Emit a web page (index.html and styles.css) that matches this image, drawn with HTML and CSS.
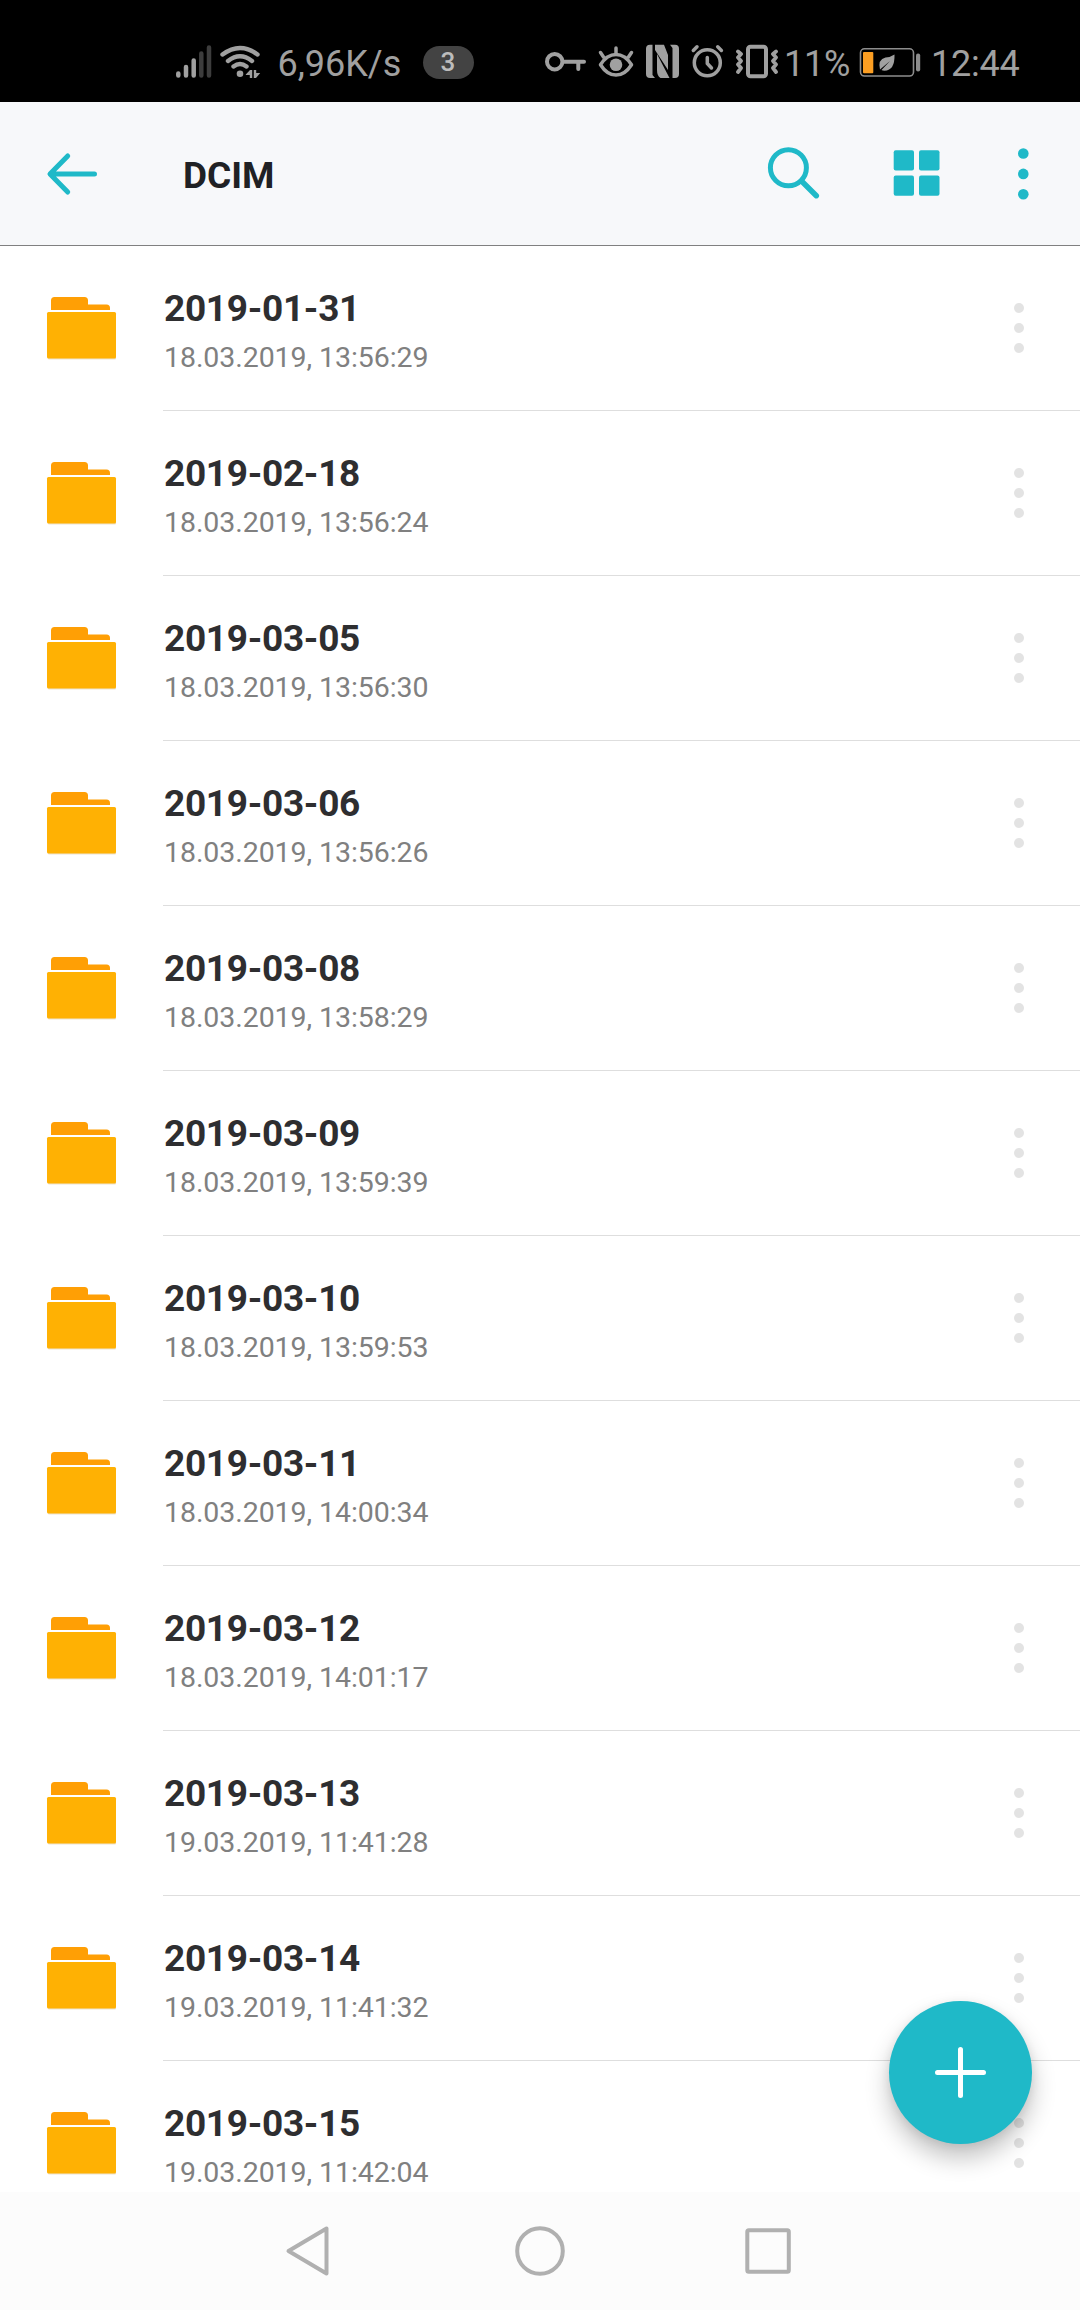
FILE: index.html
```
<!DOCTYPE html>
<html lang="en">
<head>
<meta charset="utf-8">
<title>DCIM</title>
<link rel="stylesheet" href="styles.css">
</head>
<body>
<svg class="defs" aria-hidden="true">
  <symbol id="folder" viewBox="0 0 76 72">
    <path d="M6 19V7.500Q6 4 9.500 4H39.500Q43 4 43 7.500V11.500H61.500Q65 11.500 65 15V17H6Z" fill="#ff9f05"/>
    <rect x="3" y="20.500" width="68" height="46" rx="1" fill="#d9c7a3" opacity=".5"/>
    <rect x="2" y="19" width="69" height="46.500" rx="1.500" fill="#ffb103"/>
  </symbol>
  <symbol id="dots" viewBox="0 0 12 52">
    <circle cx="6" cy="6" r="5"/><circle cx="6" cy="26" r="5"/><circle cx="6" cy="46" r="5"/>
  </symbol>
</svg>

<div class="screen">
  <header class="status">
    <svg class="network" width="90" height="40" viewBox="174 42 90 40">
      <g stroke-width="4.500" stroke-linecap="round" stroke="#a0a0a0">
        <path d="M178.300 73.500V75.500M186 67V75.500M193.700 60.500V75.500"/>
        <path d="M201.300 53.500V75.500M209 47.500V75.500" stroke="#3d3d3d"/>
      </g>
      <g fill="none" stroke="#a0a0a0" stroke-width="4.400" stroke-linecap="round">
        <path d="M222.500 54.500Q240 41.500 257.500 54.500M228 61Q240 51.500 252 61M233.500 66.500Q240 61.500 246.500 66.500"/>
      </g>
      <circle cx="240" cy="73.700" r="3.300" fill="#a0a0a0"/>
      <path d="M245.800 74.500L250 70H252.200V78H249.800V75H245.800ZM253.800 70H256.200V73H260.200L256 78H253.800Z" fill="#a0a0a0"/>
    </svg>
    <span class="speed">6,96K/s</span>
    <span class="badge">3</span>
    <svg class="indicators" width="240" height="40" viewBox="542 42 240 40">
      <g fill="none" stroke="#a0a0a0" stroke-width="4" stroke-linecap="round" stroke-linejoin="round">
        <circle cx="554.700" cy="61.700" r="7.700"/>
        <path d="M563 61.700H584M578.300 62V69"/>
        <path d="M600.500 64.700Q607 54.500 616 54.500T631.500 64.700Q625 75 616 75T600.500 64.700Z" stroke-width="3.500"/>
        <path d="M616 48V54M600.500 52.500L603.500 57M631.500 52.500L628.500 57" stroke-width="3.500"/>
        <circle cx="707.300" cy="62.700" r="13" stroke-width="3.500"/>
        <path d="M707.300 57.500V63.500L711.500 68" stroke-width="3.500"/>
        <path d="M693.300 50.500L697 46.800M717.700 46.800L721.400 50.500" stroke-width="3.500"/>
        <rect x="748" y="46.800" width="18" height="29.500" rx="2.500"/>
        <path d="M738 51.500L741 54L738 57.500L741 61L738 64.500L741 68L738 72M776 51.500L773 54L776 57.500L773 61L776 64.500L773 68L776 72" stroke-width="3.800"/>
      </g>
      <circle cx="616" cy="64.700" r="6.300" fill="#a0a0a0"/>
      <path d="M650 44.700H652.500V75L655 78H650Q646 78 646 74V48.700Q646 44.700 650 44.700ZM655 44.700H664L668 55V70L655 50ZM657 54L669.500 78H660.500Q657 76 657 70ZM670 44.700H675Q679 44.700 679 48.700V74Q679 78 675 78H672.500V48Z" fill="#a0a0a0"/>
    </svg>
    <span class="percent">11%</span>
    <svg class="battery" width="62" height="32" viewBox="859 46 62 32">
      <rect x="860.500" y="48.800" width="53" height="27.200" rx="4" fill="none" stroke="#8d8d8d" stroke-width="1.600"/>
      <rect x="863" y="52" width="10.300" height="21.300" rx="1" fill="#fc9e22"/>
      <path d="M894.500 54.500Q895 70.500 884.500 70.700Q882.500 70.700 881.500 70L890 61L880 69.500Q877.500 59.500 885.500 57.500Q891 57 894.500 54.500Z" fill="#a0a0a0"/>
      <rect x="916" y="53.500" width="4.200" height="18" rx="2" fill="#8d8d8d"/>
    </svg>
    <time class="clock">12:44</time>
  </header>

  <nav class="toolbar">
    <svg class="back" width="56" height="48" viewBox="44 149.500 56 48" fill="none" stroke="#1fb9c8" stroke-width="5" stroke-linecap="round" stroke-linejoin="round">
      <path d="M94.500 173.500H51M67.700 155.500L50 173.500L67.700 191.500"/>
    </svg>
    <h1 class="title">DCIM</h1>
    <svg class="search" width="56" height="56" viewBox="765 145.500 56 56" fill="none" stroke="#1fb9c8" stroke-width="5" stroke-linecap="round">
      <circle cx="788.400" cy="167.300" r="18"/>
      <path d="M802 181L816.300 195.200" stroke-width="5.500"/>
    </svg>
    <svg class="grid" width="48" height="48" viewBox="893 149.500 48 48" fill="#1fb9c8">
      <rect x="893.700" y="149.700" width="20.300" height="20.300" rx="2"/>
      <rect x="919" y="149.700" width="20.500" height="20.300" rx="2"/>
      <rect x="893.700" y="175" width="20.300" height="20.300" rx="2"/>
      <rect x="919" y="175" width="20.500" height="20.300" rx="2"/>
    </svg>
    <svg class="overflow" width="14" height="54" viewBox="1016 146.500 14 54" fill="#1fb9c8">
      <circle cx="1023.300" cy="153" r="5.300"/><circle cx="1023.300" cy="173.400" r="5.300"/><circle cx="1023.300" cy="193.800" r="5.300"/>
    </svg>
  </nav>

  <main class="content">
    <ul class="list" id="list"></ul>
    <button class="fab" aria-label="Add">
      <svg width="55" height="55" viewBox="0 0 55 55" stroke="#fff" stroke-width="5" stroke-linecap="round"><path d="M4.500 27.500H50.500M27.500 4.500V50.500"/></svg>
    </button>
  </main>

  <footer class="navbar">
    <svg width="54" height="54" viewBox="283 2224 54 54"><path d="M327.500 2228.500V2273.500L289.500 2251Z"/></svg>
    <svg width="54" height="54" viewBox="513 2224 54 54"><circle cx="540" cy="2251" r="22.800"/></svg>
    <svg width="54" height="54" viewBox="742 2224 54 54"><rect x="748.300" y="2230.300" width="41.500" height="41.500" rx="1.500"/></svg>
  </footer>
</div>
<script src="list.js"></script>
</body>
</html>
```
FILE: styles.css
```
* { box-sizing: border-box; }
body { margin: 0; font-family: Roboto, sans-serif; background: #fff; }
svg { display: block; flex: none; }
.defs { position: absolute; width: 0; height: 0; }

.screen {
  width: 1080px;
  height: 2310px;
  display: flex;
  flex-direction: column;
  overflow: hidden;
}

.status {
  height: 102px;
  flex: none;
  display: flex;
  align-items: center;
  padding: 22px 0 0 174px;
  background: #000;
  color: #a0a0a0;
  font-size: 36px;
  line-height: 44px;
  white-space: nowrap;
}
.speed { width: 145px; margin: 4px 0 0 13.500px; }
.badge {
  width: 51px;
  height: 33px;
  border-radius: 17px;
  background: #434343;
  color: #bcbcbc;
  font-size: 26px;
  font-weight: 500;
  line-height: 33px;
  text-align: center;
}
.indicators { margin-left: 68.500px; }
.percent { width: 75px; margin: 4px 0 0 2px; letter-spacing: -.2px; }
.clock { margin: 4px 0 0 10px; letter-spacing: -.2px; }

.toolbar {
  height: 144px;
  flex: none;
  display: flex;
  align-items: center;
  padding-left: 44px;
  background: #f7f8fa;
  border-bottom: 1px solid #808080;
}
.title {
  width: 582px;
  margin: 4px 0 0 83px;
  font-size: 37px;
  line-height: 44px;
  font-weight: 700;
  color: #202124;
}
.grid { margin-left: 72px; }
.overflow { margin-left: 75px; }

.content { position: relative; flex: 1; min-height: 0; overflow: hidden; }
.list { margin: 0; padding: 0; list-style: none; }
.row { height: 165px; display: flex; padding-left: 45px; }
.folder { width: 76px; height: 72px; margin-top: 47px; }
.info {
  flex: 1;
  display: flex;
  justify-content: space-between;
  margin-left: 42px;
  padding: 41px 55px 0 1px;
  border-bottom: 1px solid #dedede;
}
.name { font-size: 37px; line-height: 44px; font-weight: 700; letter-spacing: -.3px; color: #2e2e30; }
.date { margin-top: 10px; font-size: 28.500px; line-height: 34px; letter-spacing: -.07px; color: #808080; }
.more { width: 12px; height: 52px; margin-top: 15px; fill: #e3e3e3; }

.fab {
  position: absolute;
  left: 889px;
  bottom: 48px;
  width: 143px;
  height: 143px;
  display: grid;
  place-items: center;
  padding: 0;
  border: 0;
  border-radius: 50%;
  background: #1fb9c8;
  box-shadow: 0 14px 24px rgba(0, 0, 0, .24), 0 2px 10px rgba(0, 0, 0, .08);
}

.navbar {
  height: 118px;
  flex: none;
  display: flex;
  gap: 176px;
  padding: 32px 0 0 282px;
  background: #fcfcfc;
  fill: none;
  stroke: #b0b0b0;
  stroke-width: 4;
  stroke-linejoin: round;
}
.navbar svg:nth-child(2) { margin-left: 1px; }
.navbar svg:nth-child(3) { margin-left: -2px; }
```
FILE: list.js
```
const folders = [
  ['2019-01-31', '18.03.2019, 13:56:29'],
  ['2019-02-18', '18.03.2019, 13:56:24'],
  ['2019-03-05', '18.03.2019, 13:56:30'],
  ['2019-03-06', '18.03.2019, 13:56:26'],
  ['2019-03-08', '18.03.2019, 13:58:29'],
  ['2019-03-09', '18.03.2019, 13:59:39'],
  ['2019-03-10', '18.03.2019, 13:59:53'],
  ['2019-03-11', '18.03.2019, 14:00:34'],
  ['2019-03-12', '18.03.2019, 14:01:17'],
  ['2019-03-13', '19.03.2019, 11:41:28'],
  ['2019-03-14', '19.03.2019, 11:41:32'],
  ['2019-03-15', '19.03.2019, 11:42:04'],
];

document.getElementById('list').innerHTML = folders.map(([name, date]) => `
  <li class="row">
    <svg class="folder"><use href="#folder"/></svg>
    <div class="info">
      <div>
        <div class="name">${name}</div>
        <div class="date">${date}</div>
      </div>
      <svg class="more"><use href="#dots"/></svg>
    </div>
  </li>`).join('');
```
